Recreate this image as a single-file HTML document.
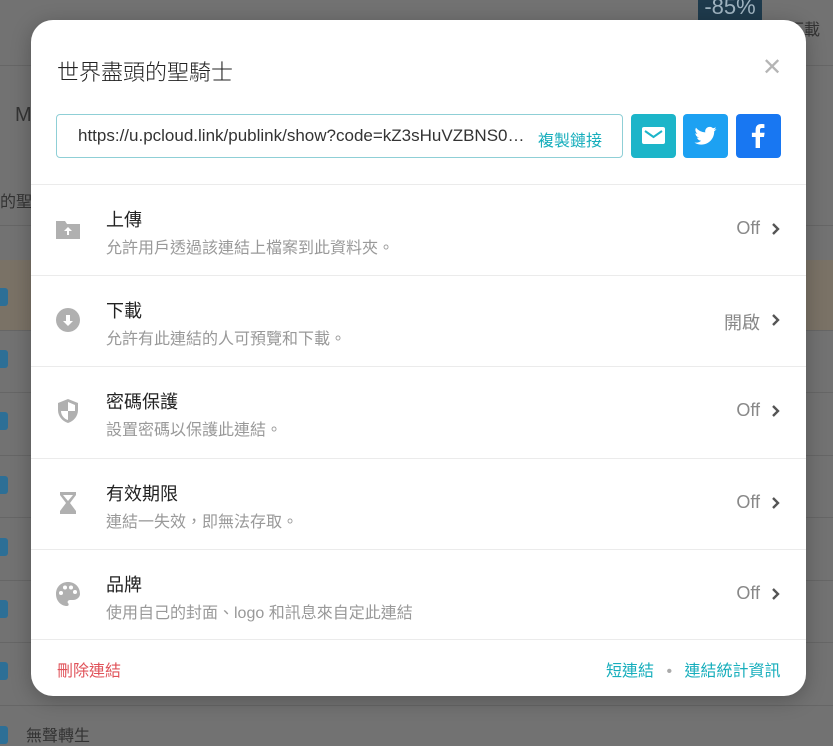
<!DOCTYPE html>
<html><head><meta charset="utf-8"><style>
*{margin:0;padding:0;box-sizing:border-box}
body{width:833px;height:736px;overflow:hidden;background:#727272;font-family:"Liberation Sans","Noto Sans CJK TC",sans-serif;position:relative}
.bg{position:absolute;color:#333}
.hl{position:absolute;left:0;right:0;height:1px;background:#666}
.sq{position:absolute;left:0;width:8px;height:18px;background:#2d6f96;border-radius:0 3px 3px 0}
.modal{position:absolute;left:31px;top:20px;width:775px;height:676px;background:#fff;border-radius:22px;overflow:hidden;box-shadow:0 4px 20px rgba(0,0,0,.25)}
.title{position:absolute;left:26px;top:35px;font-size:22px;color:#222;font-weight:300}
.close{position:absolute;left:731px;top:33px;font-size:24px;color:#b5b5b5;font-weight:300}
.input{position:absolute;left:25px;top:94px;width:567px;height:44px;border:1px solid #8fcfd6;border-radius:4px;font-size:17px;color:#333;padding:11px 0 0 21px;white-space:nowrap}
.input span{position:absolute;left:481px;top:12px;color:#17aebc;font-size:16px}
.btn{position:absolute;top:94px;width:45px;height:44px;border-radius:4px}
.row{position:absolute;left:0;width:775px;height:91px;border-top:1px solid #ebebeb}
.row .ic{position:absolute;left:24px;top:31px;width:26px;height:26px}
.row .t{position:absolute;left:75px;top:21px;font-size:18px;color:#222}
.row .d{position:absolute;left:75px;top:49px;font-size:16px;color:#999}
.row .v{position:absolute;right:46px;top:33px;font-size:18px;color:#888}
.row .ch{position:absolute;right:26px;top:37px;width:9px;height:14px}
.foot{position:absolute;top:637px;font-size:16px}
</style></head><body>
<div class="bg" style="left:698px;top:0;width:64px;height:20px;background:#1e3a4c;color:#9fb3c0;font-size:22px;text-align:center;line-height:14px">-85%</div>
<div class="bg" style="left:788px;top:16px;font-size:16px">下載</div>
<div class="hl" style="top:65px"></div>
<div class="bg" style="left:15px;top:104px;font-size:20px">M</div>
<div class="bg" style="left:0;top:188px;font-size:16px">的聖</div>
<div class="hl" style="top:225px"></div>
<div class="bg" style="left:0;top:260px;width:833px;height:70px;background:#7a7266"></div>
<div class="sq" style="top:288px"></div><div class="sq" style="top:350px"></div><div class="sq" style="top:412px"></div><div class="sq" style="top:476px"></div><div class="sq" style="top:538px"></div><div class="sq" style="top:600px"></div><div class="sq" style="top:662px"></div><div class="sq" style="top:726px"></div>
<div class="hl" style="top:330px"></div><div class="hl" style="top:392px"></div><div class="hl" style="top:455px"></div><div class="hl" style="top:517px"></div><div class="hl" style="top:580px"></div><div class="hl" style="top:642px"></div><div class="hl" style="top:705px"></div>
<div class="bg" style="left:26px;top:722px;font-size:16px">無聲轉生</div>
<div class="modal">
<div class="title">世界盡頭的聖騎士</div>
<div class="close">✕</div>
<div class="input">https://u.pcloud.link/publink/show?code=kZ3sHuVZBNS0…<span>複製鏈接</span></div>
<div class="btn" style="left:600px;background:#1cb5c9"><svg width="45" height="44"><rect x="11" y="13" width="23" height="17" rx="2" fill="#fff"/><path d="M14 17 L22.5 23 L31 17" stroke="#1cb5c9" stroke-width="2" fill="none"/></svg></div>
<div class="btn" style="left:652px;background:#1da1f2"><svg width="45" height="44" viewBox="-10 -10 44 44"><path fill="#fff" d="M23 5c-.8.4-1.7.6-2.6.7.9-.6 1.6-1.4 2-2.5-.9.5-1.9.9-2.9 1.1A4.5 4.5 0 0 0 11.8 8.4 12.8 12.8 0 0 1 2.5 3.7a4.5 4.5 0 0 0 1.4 6c-.7 0-1.400-.2-2-.6 0 2.200 1.600 4 3.600 4.400-.7.2-1.400.2-2 .1.6 1.800 2.200 3.100 4.200 3.100A9 9 0 0 1 1 18.600a12.800 12.800 0 0 0 6.900 2c8.300 0 12.800-6.900 12.800-12.800v-.6C21.600 6.600 22.400 5.900 23 5z"/></svg></div>
<div class="btn" style="left:705px;background:#1877f2"><svg width="45" height="44"><path fill="#fff" d="M24 34V23h4l.6-4.3H24v-2.700c0-1.200.4-2 2.100-2h2.300V10.200c-.4 0-1.800-.2-3.300-.2-3.300 0-5.500 2-5.500 5.600v3.100h-3.700V23h3.700v11z"/></svg></div>
<div class="row" style="top:164px"><svg class="ic" viewBox="0 0 26 26"><path d="M1 5h9l2 3h13v15H1z" fill="#b0b0b0"/><path d="M13 11l-4 4h3v4h2v-4h3z" fill="#fff"/></svg><div class="t">上傳</div><div class="d">允許用戶透過該連結上檔案到此資料夾。</div><div class="v">Off</div><svg class="ch"><path d="M2 2l5 5-5 5" stroke="#555" stroke-width="2.4" fill="none"/></svg></div>
<div class="row" style="top:255px"><svg class="ic" viewBox="0 0 26 26"><circle cx="13" cy="13" r="12" fill="#b0b0b0"/><path d="M13 19l-5-5h3V8h4v6h3z" fill="#fff"/></svg><div class="t">下載</div><div class="d">允許有此連結的人可預覽和下載。</div><div class="v">開啟</div><svg class="ch"><path d="M2 2l5 5-5 5" stroke="#555" stroke-width="2.4" fill="none"/></svg></div>
<div class="row" style="top:346px"><svg class="ic" viewBox="0 0 26 26"><path d="M13 1L3 5v7c0 6 4 11 10 13 6-2 10-7 10-13V5z" fill="#b0b0b0"/><path d="M13 4v9H6c0 4 3 8 7 9v-9h7V7z" fill="#fff"/></svg><div class="t">密碼保護</div><div class="d">設置密碼以保護此連結。</div><div class="v">Off</div><svg class="ch"><path d="M2 2l5 5-5 5" stroke="#555" stroke-width="2.4" fill="none"/></svg></div>
<div class="row" style="top:438px"><svg class="ic" viewBox="0 0 26 26"><path d="M5 2h16v3l-6 8 6 8v3H5v-3l6-8-6-8z" fill="#b0b0b0"/><path d="M8 5h10l-5 6z" fill="#fff"/></svg><div class="t">有效期限</div><div class="d">連結一失效，即無法存取。</div><div class="v">Off</div><svg class="ch"><path d="M2 2l5 5-5 5" stroke="#555" stroke-width="2.4" fill="none"/></svg></div>
<div class="row" style="top:529px"><svg class="ic" viewBox="0 0 26 26"><path d="M13 1C6 1 1 6 1 13s5 12 11 12c2 0 2-2 1-3-1-1 0-3 2-3h3c4 0 7-3 7-6C25 6 20 1 13 1z" fill="#b0b0b0"/><circle cx="6" cy="12" r="2" fill="#fff"/><circle cx="10" cy="6.500" r="2" fill="#fff"/><circle cx="16" cy="6.500" r="2" fill="#fff"/><circle cx="20" cy="11" r="2" fill="#fff"/></svg><div class="t">品牌</div><div class="d">使用自己的封面、logo 和訊息來自定此連結</div><div class="v">Off</div><svg class="ch"><path d="M2 2l5 5-5 5" stroke="#555" stroke-width="2.4" fill="none"/></svg></div>
<div class="row" style="top:619px;height:60px"></div>
<div class="foot" style="left:26px;color:#e0535a">刪除連結</div>
<div class="foot" style="left:575px;color:#17aebc">短連結 <span style="color:#aaa;margin:0 8px">•</span> 連結統計資訊</div>
</div>
</body></html>
